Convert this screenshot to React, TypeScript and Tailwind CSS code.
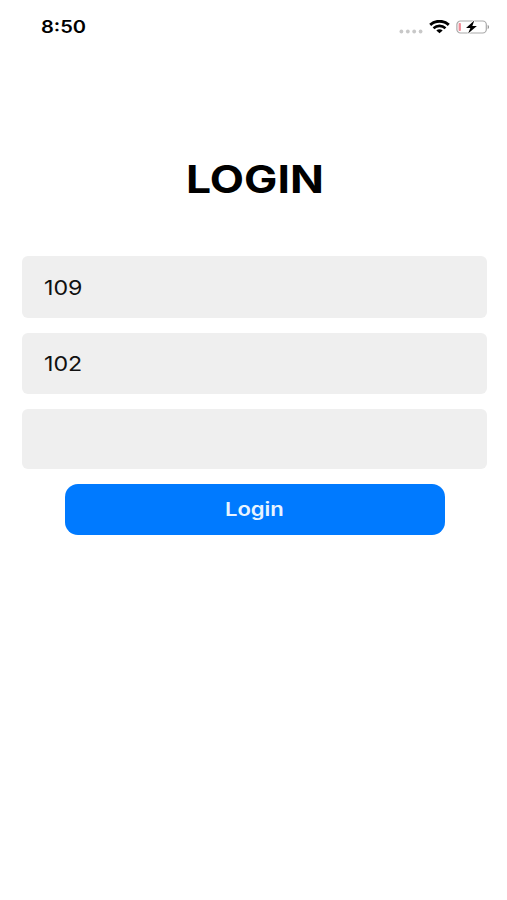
import React, { useState } from "react";
import clsx from "clsx";

interface LoginFieldProps {
  name: string;
  type?: string;
  value: string;
  className?: string;
  onChange: (value: string) => void;
}

const SignalDots: React.FC = () => (
  <svg className="mt-[8px] h-[5px] w-[24px]" viewBox="0 0 24 5" fill="#c8c8c8">
    <circle cx="2.4" cy="2.5" r="1.9" />
    <circle cx="8.8" cy="2.5" r="1.9" />
    <circle cx="15.2" cy="2.5" r="1.9" />
    <circle cx="21.6" cy="2.5" r="1.9" />
  </svg>
);

const WifiIcon: React.FC = () => (
  <svg className="ml-[6px] h-[14px] w-[21px]" viewBox="0 0 21 14" fill="none" stroke="#000">
    <path d="M1.2 4.8C6.4 0.1 14.6 0.1 19.8 4.8" strokeWidth="2.9" />
    <path d="M4.5 8.2C8 5.1 13 5.1 16.5 8.2" strokeWidth="2.6" />
    <path d="M7.3 10.5C9.2 8.9 11.8 8.9 13.7 10.5L10.5 13.3Z" fill="#000" stroke="none" />
  </svg>
);

const BatteryIcon: React.FC = () => (
  <svg className="ml-[6px] h-[16px] w-[34px]" viewBox="0 0 34 16" fill="none">
    <rect x="0.9" y="2" width="29.4" height="12" rx="3.6" stroke="#a9a9a9" strokeWidth="1.2" />
    <rect x="2.6" y="4" width="2.3" height="8" rx="0.8" fill="#f08c98" />
    <path d="M31.7 5.8C33.5 6.5 33.5 9.5 31.7 10.2Z" fill="#8f8f8f" />
    <path
      d="M18.3 1.4L10 8.9H14.4L12.1 14.6L20.9 7.1H16.3Z"
      fill="#000"
      stroke="#fff"
      strokeWidth="1.4"
      paintOrder="stroke"
    />
  </svg>
);

const StatusBar: React.FC = () => (
  <header className="flex h-[54px] items-center justify-between pr-[17px] pl-[41px]">
    <span className="mt-[2px] origin-left scale-x-[1.18] text-[17px] font-semibold">8:50</span>
    <div className="flex items-center">
      <SignalDots />
      <WifiIcon />
      <BatteryIcon />
    </div>
  </header>
);

const LoginField: React.FC<LoginFieldProps> = ({ name, type = "text", value, className, onChange }) => (
  <div className={clsx("w-full overflow-hidden rounded-[6px] bg-[#efefef]", className)}>
    <input
      className="h-full w-full origin-left scale-x-[1.16] bg-transparent pt-px pl-[19px] text-[20px] text-[#111] outline-none"
      type={type}
      aria-label={name}
      value={value}
      onChange={(e) => onChange(e.target.value)}
    />
  </div>
);

const App: React.FC = () => {
  const [host, setHost] = useState("109");
  const [user, setUser] = useState("102");
  const [password, setPassword] = useState("");

  return (
    <div className="min-h-[900px] w-full overflow-hidden bg-white font-['Inter',sans-serif] text-black">
      <StatusBar />
      <form className="flex flex-col items-center pr-5 pl-[22px]" onSubmit={(e) => e.preventDefault()}>
        <h1 className="mt-[98px] h-[54px] scale-x-[1.17] text-[38px] leading-[54px] font-bold">LOGIN</h1>
        <LoginField name="Host" value={host} onChange={setHost} className="mt-[50px] h-[62px]" />
        <LoginField name="User" value={user} onChange={setUser} className="mt-[15px] h-[61px]" />
        <LoginField
          name="Password"
          type="password"
          value={password}
          onChange={setPassword}
          className="mt-[15px] h-[60px]"
        />
        <button
          type="submit"
          className="mt-[14.5px] h-[51px] w-[380px] rounded-[13px] bg-[#007aff] pt-[2px] text-[19px] font-semibold text-[#e8f4ff]"
        >
          <span className="inline-block scale-x-[1.16]">Login</span>
        </button>
      </form>
    </div>
  );
};

export default App;
